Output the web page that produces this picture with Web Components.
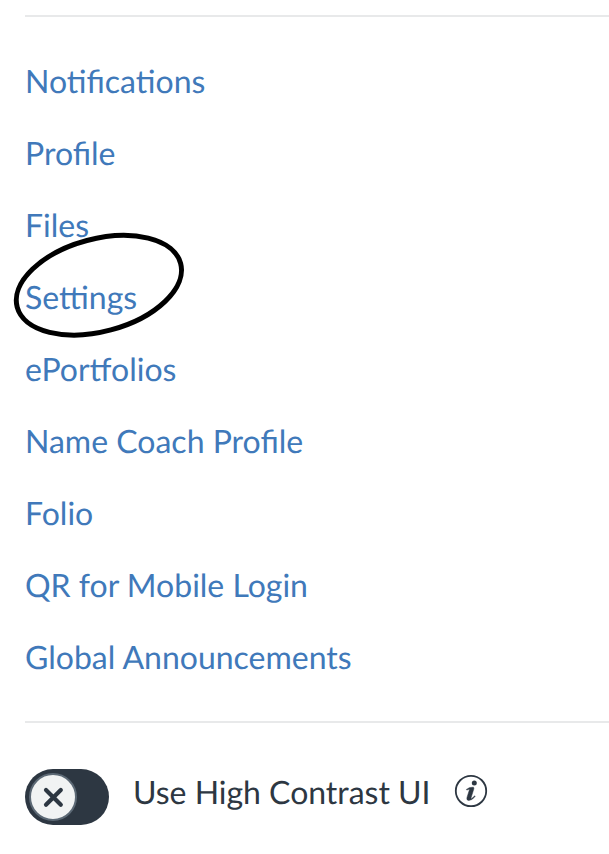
<!DOCTYPE html>
<html lang="en">
<head>
<meta charset="utf-8">
<title>Account</title>
<style>
html,body{margin:0;background:#fff;overflow:hidden}
</style>
</head>
<body>
<account-tray></account-tray>
<script>
class TrayLink extends HTMLElement{
  constructor(){super();this.attachShadow({mode:'open'}).innerHTML=`<style>
  :host{display:block;height:72px;line-height:72px;white-space:nowrap}
  a{color:#4079ba;text-decoration:none}
  </style><a><slot></slot></a>`;}
}
class CircleMark extends HTMLElement{
  constructor(){super();this.attachShadow({mode:'open'}).innerHTML=`<style>
  :host{position:absolute;left:0;top:220px;width:200px;height:130px;pointer-events:none}
  svg{display:block}
  </style><svg width="200" height="130" viewBox="0 0 200 130"><ellipse cx="98.9" cy="65.2" rx="84.6" ry="46.3" transform="rotate(-15 98.9 65.2)" fill="none" stroke="#000" stroke-width="5"/></svg>`;}
}
class ContrastToggle extends HTMLElement{
  constructor(){super();this.attachShadow({mode:'open'}).innerHTML=`<style>
  :host{display:flex;align-items:center;height:56px;color:#2d3742}
  svg{display:block;flex:none}
  .label{margin:-12px 24px 0 24px;white-space:nowrap;letter-spacing:-.02px}
  .info{margin:-12px 0 0 -1px}
  </style>
  <svg width="84" height="56" viewBox="0 0 84 56"><rect width="84" height="56" rx="28" fill="#2d3742"/><circle cx="28" cy="28" r="23" fill="#f1f3f3" stroke="#5c6975" stroke-width="2"/><path d="M21 21L35.8 35.8M35.8 21L21 35.8" stroke="#2d3742" stroke-width="4.2" stroke-linecap="round"/></svg>
  <span class="label"><slot></slot></span>
  <svg class="info" width="34" height="34" viewBox="0 0 34 34"><circle cx="17" cy="17" r="15.2" fill="none" stroke="#2d3742" stroke-width="1.8"/><circle cx="20.3" cy="8.9" r="2.5" fill="#2d3742"/><path d="M12.4 15.4Q15.5 12.8 19.3 13.2Q20.3 13.4 19.8 15L17 24Q16.8 25 17.6 24.6Q19 23.8 20.6 21.8L21.2 22.3Q18.3 26.5 14.7 26.4Q12.2 26.2 13 23.4L15.4 15.8Q15.7 14.4 12.8 16.1Z" fill="#2d3742" stroke="#2d3742" stroke-width=".5"/></svg>`;}
}
class AccountTray extends HTMLElement{
  constructor(){super();this.attachShadow({mode:'open'}).innerHTML=`<style>
  :host{display:block;box-sizing:border-box;height:854px;padding:15px 0 0 25px;font:32px Lato,sans-serif;text-rendering:geometricPrecision}
  hr{border:0;height:2px;background:#e8e9ea;margin:0}
  nav{padding:28px 0}
  contrast-toggle{margin-top:46px}
  </style><hr><nav>
  <tray-link>Notifications</tray-link><tray-link>Profile</tray-link><tray-link>Files</tray-link><tray-link>Settings</tray-link><tray-link>ePortfolios</tray-link><tray-link>Name Coach Profile</tray-link><tray-link>Folio</tray-link><tray-link>QR for Mobile Login</tray-link><tray-link>Global Announcements</tray-link></nav><hr>
  <contrast-toggle>Use High Contrast UI</contrast-toggle><circle-mark></circle-mark>`;}
}
customElements.define('tray-link',TrayLink);
customElements.define('circle-mark',CircleMark);
customElements.define('contrast-toggle',ContrastToggle);
customElements.define('account-tray',AccountTray);
</script>
</body>
</html>
